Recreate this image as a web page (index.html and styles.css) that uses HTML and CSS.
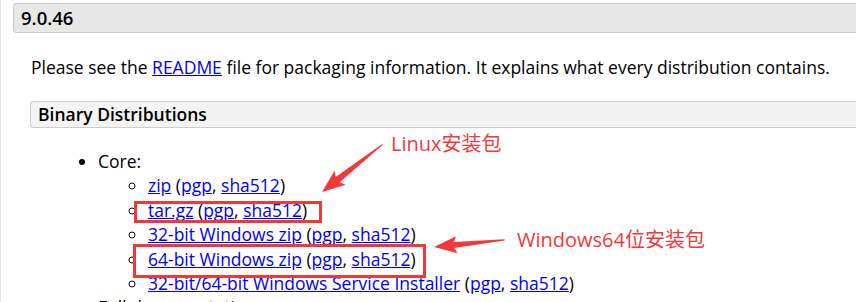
FILE: index.html
```html
<!DOCTYPE html>
<html lang="zh">
<head>
<meta charset="utf-8">
<link rel="stylesheet" href="styles.css">
</head>
<body>
<div class="page">
  <h3 class="version">9.0.46</h3>
  <div class="section">
    <p class="intro">Please see the <a href="#">README</a> file for packaging information. It explains what every distribution contains.</p>
    <h4 class="sub">Binary Distributions</h4>
    <ul class="dist">
      <li>Core:
        <ul class="files">
          <li><a href="#">zip</a> (<a href="#">pgp</a>, <a href="#">sha512</a>)</li>
          <li><a href="#">tar.gz</a> (<a href="#">pgp</a>, <a href="#">sha512</a>)</li>
          <li><a href="#">32-bit Windows zip</a> (<a href="#">pgp</a>, <a href="#">sha512</a>)</li>
          <li><a href="#">64-bit Windows zip</a> (<a href="#">pgp</a>, <a href="#">sha512</a>)</li>
          <li><a href="#">32-bit/64-bit Windows Service Installer</a> (<a href="#">pgp</a>, <a href="#">sha512</a>)</li>
        </ul>
      </li>
      <li>Full documentation:</li>
    </ul>
  </div>
  <div class="note note-linux">Linux安装包</div>
  <div class="note note-win">Windows64位安装包</div>
  <div class="hl hl-tar"></div>
  <div class="hl hl-win"></div>
  <svg class="arrows" width="856" height="302" viewBox="0 0 856 302">
    <path transform="translate(321 192) rotate(-38.2)" d="M0 0 L23 -9 L20 -3.2 L77 -0.6 L77 0.6 L20 3.2 L23 9 Z" fill="#f3383a"/>
    <path transform="translate(433 247) rotate(-5.7)" d="M0 0 L23 -8.5 L20 -3 L71 -0.6 L71 0.6 L20 3 L23 8.5 Z" fill="#f3383a"/>
  </svg>
</div>
</body>
</html>
```
FILE: styles.css
```css
html, body {
  margin: 0;
  padding: 0;
  background: #fff;
}
.page {
  position: relative;
  width: 856px;
  height: 302px;
  overflow: hidden;
  font-family: "Open Sans", "Noto Sans CJK SC", sans-serif;
  color: #000;
  border-left: 1px solid #e4e4e4;
  box-sizing: border-box;
  padding-left: 12px;
  padding-top: 3px;
}
.version {
  margin: 0;
  height: 28px;
  line-height: 28px;
  background: #e8e8e8;
  border: 1px solid #c9c9c9;
  border-radius: 4px;
  border-right: none;
  border-top-right-radius: 0;
  border-bottom-right-radius: 0;
  padding-left: 7px;
  font-size: 18.5px;
  font-weight: 600;
}
.section {
  padding-left: 17px;
}
.intro {
  margin: 23px 0 0 1px;
  font-size: 17.5px;
  line-height: 22px;
}
a {
  color: #0000ee;
  text-decoration: underline;
}
.sub {
  margin: 23px 0 0 0;
  height: 25px;
  line-height: 25px;
  background: #f4f4f4;
  border: 1px solid #cccccc;
  border-right: none;
  border-radius: 4px 0 0 4px;
  padding-left: 7px;
  font-size: 17.5px;
  font-weight: 600;
}
.dist {
  margin: 21px 0 0 0;
  padding-left: 68px;
  font-size: 17.5px;
  line-height: 24.4px;
  list-style: disc;
}
.files {
  margin: 0;
  padding-left: 50px;
  list-style: circle;
}
.note {
  position: absolute;
  color: #f3383a;
  font-size: 20px;
  line-height: 24px;
  font-family: "Open Sans", "Noto Sans CJK SC", sans-serif;
}
.note-linux { left: 390px; top: 132px; }
.note-win { left: 516px; top: 228px; }
.hl {
  position: absolute;
  border: 3px solid #f0383a;
  box-sizing: border-box;
}
.hl-tar { left: 133px; top: 201px; width: 188px; height: 22px; }
.hl-win { left: 132px; top: 244px; width: 293px; height: 34px; }
.arrows {
  position: absolute;
  left: 0;
  top: 0;
}
```
